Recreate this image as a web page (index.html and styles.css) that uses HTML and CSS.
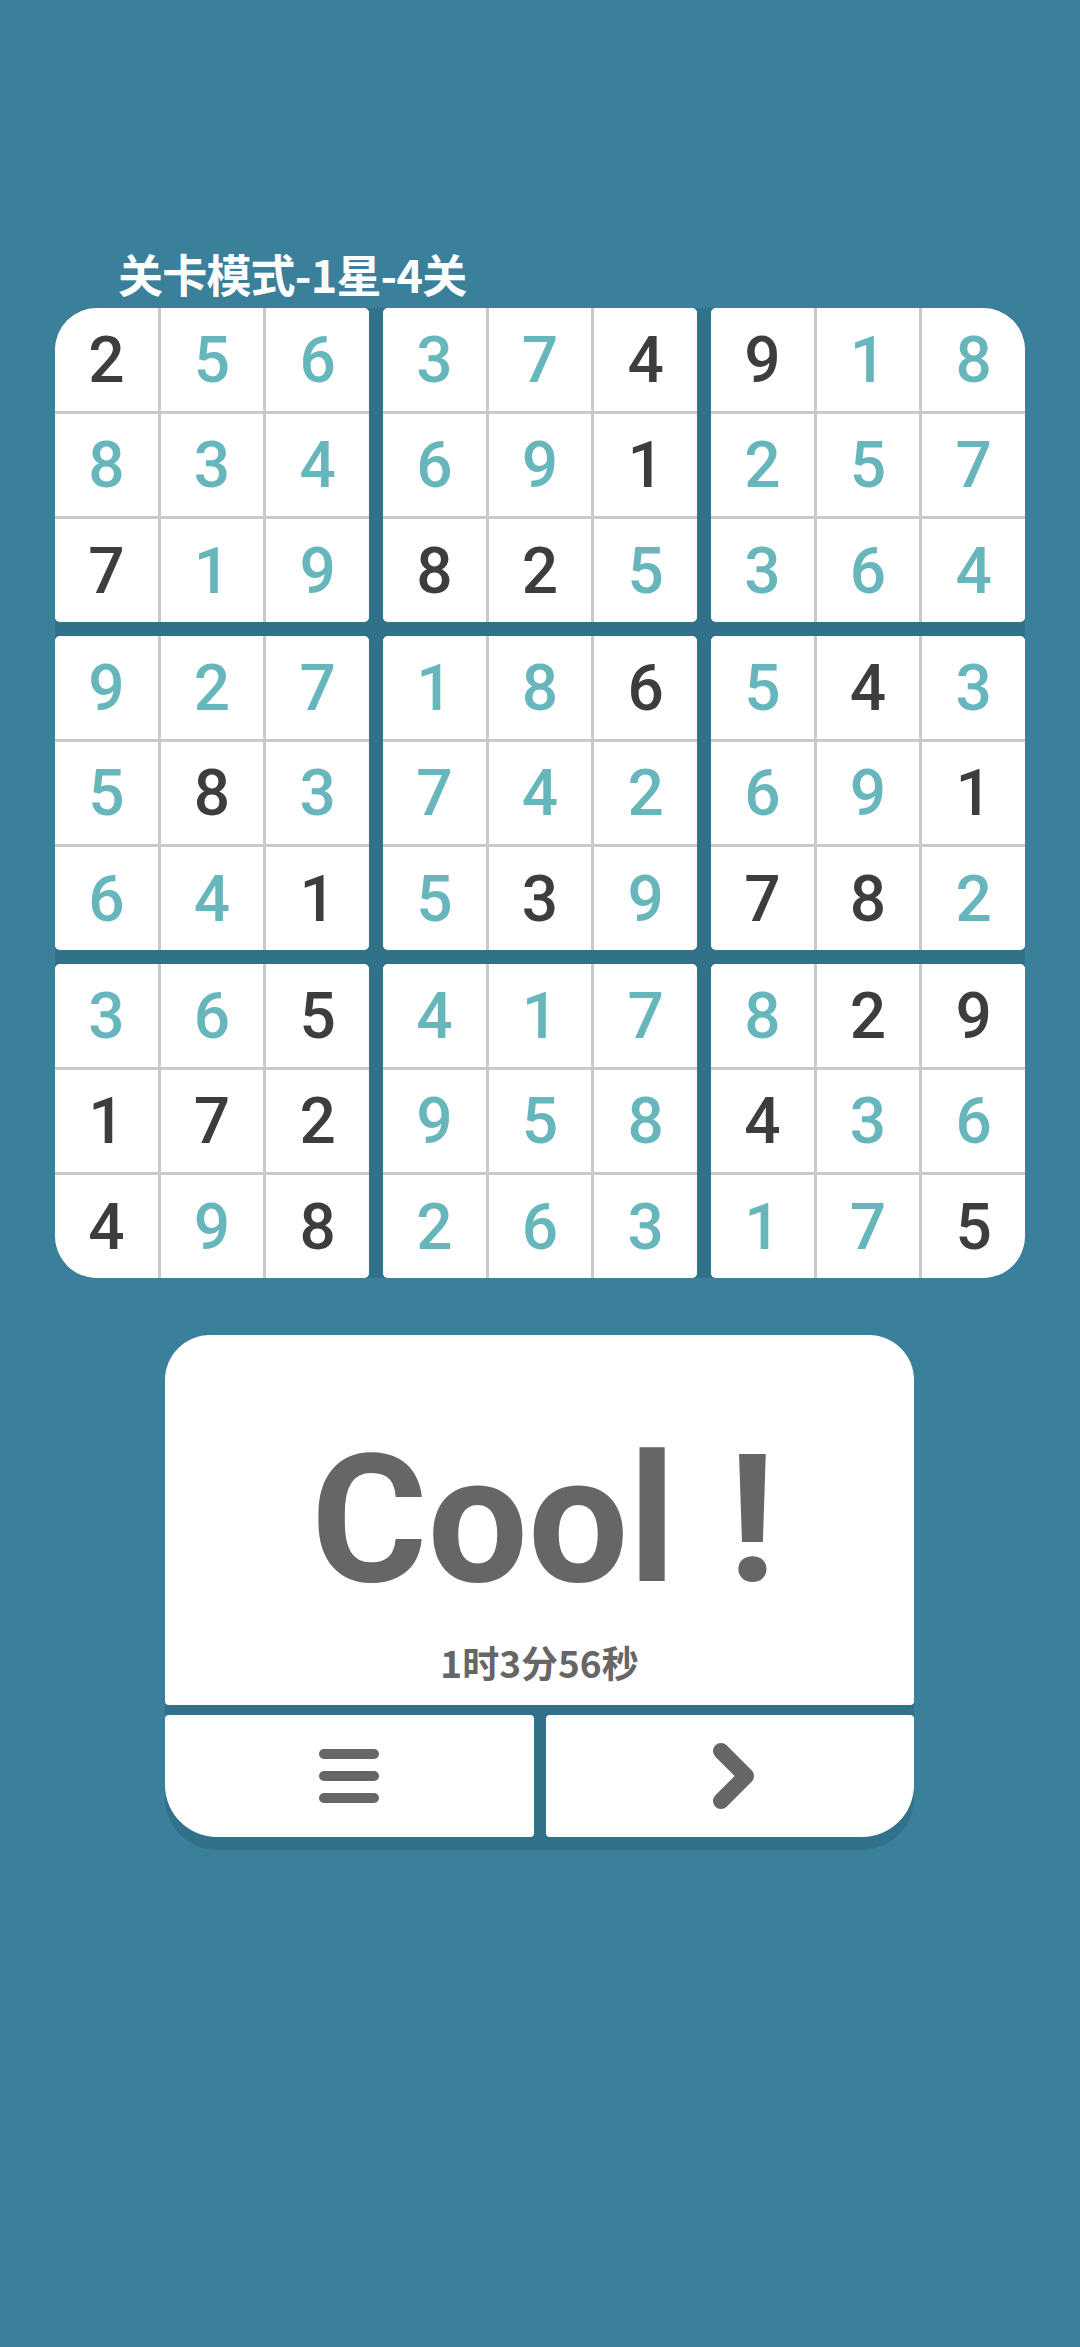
FILE: index.html
```html
<!DOCTYPE html>
<html lang="zh">
<head>
<meta charset="utf-8">
<title>数独</title>
<link rel="stylesheet" href="styles.css">
</head>
<body>
<div class="page">
  <div class="title">关卡模式-1星-4关</div>
  <div class="board">
    <div class="box"><div class="c d">2</div><div class="c">5</div><div class="c">6</div><div class="c">8</div><div class="c">3</div><div class="c">4</div><div class="c d">7</div><div class="c">1</div><div class="c">9</div></div>
    <div class="box"><div class="c">3</div><div class="c">7</div><div class="c d">4</div><div class="c">6</div><div class="c">9</div><div class="c d">1</div><div class="c d">8</div><div class="c d">2</div><div class="c">5</div></div>
    <div class="box"><div class="c d">9</div><div class="c">1</div><div class="c">8</div><div class="c">2</div><div class="c">5</div><div class="c">7</div><div class="c">3</div><div class="c">6</div><div class="c">4</div></div>
    <div class="box"><div class="c">9</div><div class="c">2</div><div class="c">7</div><div class="c">5</div><div class="c d">8</div><div class="c">3</div><div class="c">6</div><div class="c">4</div><div class="c d">1</div></div>
    <div class="box"><div class="c">1</div><div class="c">8</div><div class="c d">6</div><div class="c">7</div><div class="c">4</div><div class="c">2</div><div class="c">5</div><div class="c d">3</div><div class="c">9</div></div>
    <div class="box"><div class="c">5</div><div class="c d">4</div><div class="c">3</div><div class="c">6</div><div class="c">9</div><div class="c d">1</div><div class="c d">7</div><div class="c d">8</div><div class="c">2</div></div>
    <div class="box"><div class="c">3</div><div class="c">6</div><div class="c d">5</div><div class="c d">1</div><div class="c d">7</div><div class="c d">2</div><div class="c d">4</div><div class="c">9</div><div class="c d">8</div></div>
    <div class="box"><div class="c">4</div><div class="c">1</div><div class="c">7</div><div class="c">9</div><div class="c">5</div><div class="c">8</div><div class="c">2</div><div class="c">6</div><div class="c">3</div></div>
    <div class="box"><div class="c">8</div><div class="c d">2</div><div class="c d">9</div><div class="c d">4</div><div class="c">3</div><div class="c">6</div><div class="c">1</div><div class="c">7</div><div class="c d">5</div></div>
  </div>
  <div class="result">
    <div class="panel">
      <div class="cool">Cool !</div>
      <div class="time">1时3分56秒</div>
    </div>
    <div class="buttons">
      <div class="btn btn-left">
        <svg width="64" height="56" viewBox="0 0 64 56"><g stroke="#666" stroke-width="10" stroke-linecap="round"><line x1="7" y1="6" x2="57" y2="6"/><line x1="7" y1="28" x2="57" y2="28"/><line x1="7" y1="50" x2="57" y2="50"/></g></svg>
      </div>
      <div class="btn btn-right">
        <svg width="50" height="74" viewBox="0 0 50 74"><polyline points="12,12 37,37 12,62" fill="none" stroke="#666" stroke-width="16" stroke-linecap="round" stroke-linejoin="round"/></svg>
      </div>
    </div>
  </div>
</div>
</body>
</html>
```

FILE: styles.css
```css
html, body {
  margin: 0;
  padding: 0;
  background: #3a809b;
}
body {
  width: 1080px;
  height: 2347px;
  font-family: Roboto, "Noto Sans CJK SC", sans-serif;
}
.page {
  padding: 248px 55px 0 55px;
  display: flex;
  flex-direction: column;
}
.title {
  padding-left: 63px;
  color: #ffffff;
  font-family: "Noto Sans CJK SC", sans-serif;
  font-weight: 700;
  font-size: 45px;
  line-height: 52px;
  height: 60px;
  letter-spacing: -0.8px;
}
.board {
  width: 970px;
  height: 970px;
  display: grid;
  grid-template-columns: repeat(3, 314px);
  grid-template-rows: repeat(3, 314px);
  gap: 14px;
  background: #317189;
  border-radius: 42px;
  overflow: hidden;
}
.box {
  display: grid;
  grid-template-columns: repeat(3, 1fr);
  grid-template-rows: repeat(3, 1fr);
  gap: 3px;
  background: #c9c9c9;
  border-radius: 5px;
  overflow: hidden;
}
.c {
  background: #ffffff;
  display: flex;
  align-items: center;
  justify-content: center;
  font-family: Roboto, sans-serif;
  font-weight: 500;
  font-size: 64px;
  padding-top: 2px;
  color: #67b6bc;
}
.c.d {
  color: #3d3d3d;
}
.result {
  margin: 57px 0 0 110px;
  width: 749px;
  background: #317189;
  border-radius: 45px 45px 52px 52px;
  padding-bottom: 13px;
  display: flex;
  flex-direction: column;
  gap: 10px;
}
.panel {
  height: 370px;
  background: #ffffff;
  border-radius: 45px 45px 4px 4px;
  display: flex;
  flex-direction: column;
  align-items: center;
  color: #666666;
}
.cool {
  margin-top: 86px;
  padding-left: 8px;
  font-family: Roboto, sans-serif;
  font-weight: 700;
  font-size: 178px;
  line-height: 198px;
  word-spacing: 8px;
}
.time {
  margin-top: 21px;
  font-family: "Noto Sans CJK SC", sans-serif;
  font-weight: 700;
  font-size: 37px;
  line-height: 44px;
  letter-spacing: 0;
}
.buttons {
  display: flex;
  gap: 12px;
  height: 122px;
}
.btn {
  flex: 1;
  background: #ffffff;
  display: flex;
  align-items: center;
  justify-content: center;
}
.btn-left {
  border-radius: 4px 4px 4px 52px;
}
.btn-right {
  border-radius: 4px 4px 52px 4px;
}
.btn-right svg {
  margin-left: 8px;
}
```
